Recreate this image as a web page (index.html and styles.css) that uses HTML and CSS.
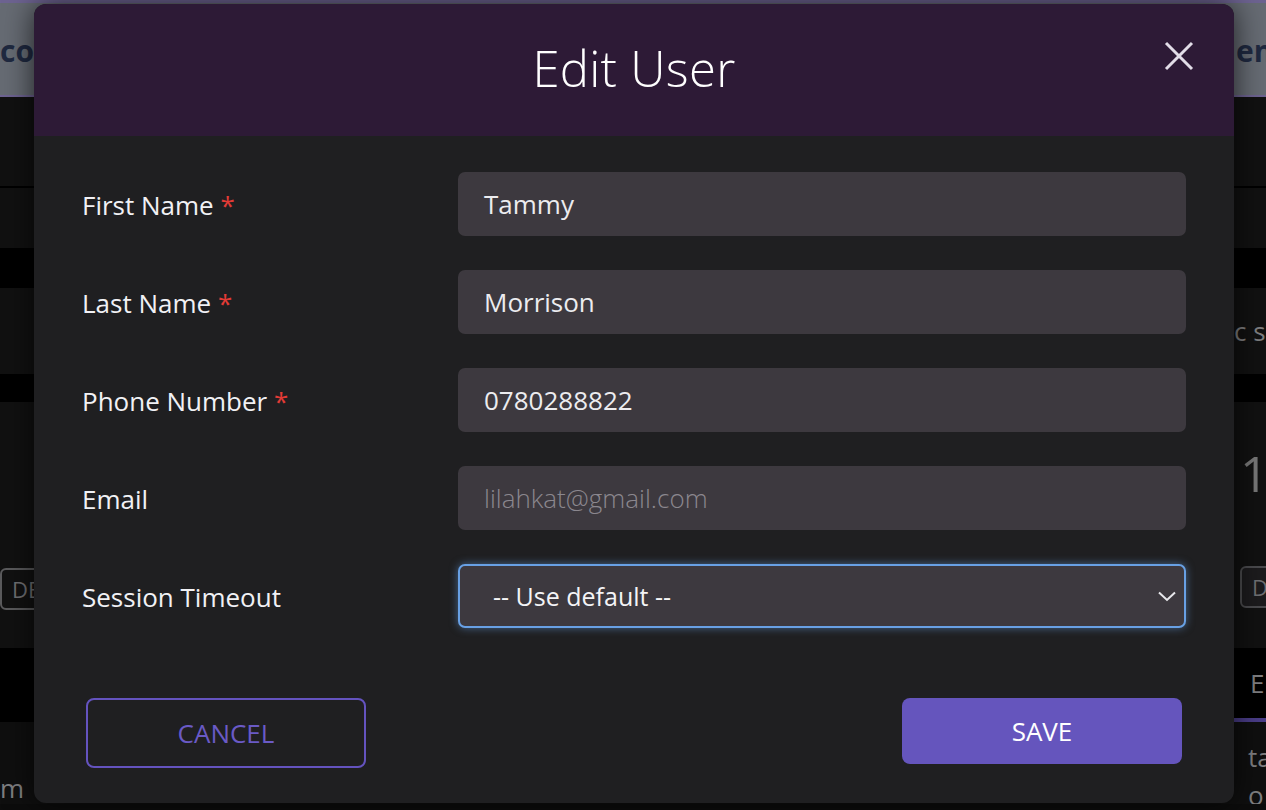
FILE: index.html
```html
<!DOCTYPE html>
<html lang="en">
<head>
    <meta charset="UTF-8">
    <meta name="viewport" content="width=device-width, initial-scale=1.0">
    <title>Edit User</title>
    <link rel="stylesheet" href="styles.css">
</head>
<body>
    <!-- page behind the modal (dimmed) -->
    <div class="page">
        <div class="row topbar">
            <div class="side left brand">sco</div>
            <div></div>
            <div class="side right brand">em</div>
        </div>
        <div class="row r1"><div></div><div></div><div></div></div>
        <div class="row r2"><div></div><div></div><div></div></div>
        <div class="row gapbar h40"><div></div><div></div><div></div></div>
        <div class="row r3">
            <div class="side left"></div>
            <div></div>
            <div class="side right muted">c si</div>
        </div>
        <div class="row gapbar h28"><div></div><div></div><div></div></div>
        <div class="row r4">
            <div class="side left-btn-wrap">
                <span class="ghost-btn left-btn">DE</span>
            </div>
            <div></div>
            <div class="side right stack">
                <span class="big-num">1</span>
                <span class="ghost-btn right-btn">D</span>
            </div>
        </div>
        <div class="row r5">
            <div></div>
            <div></div>
            <div class="side right muted tab">E</div>
        </div>
        <div class="row r6">
            <div class="side left muted bottom">m</div>
            <div></div>
            <div class="side right muted lines">ta<br>o</div>
        </div>
    </div>

    <div class="modal">
        <div class="modal-header">
            <h2 class="modal-title">Edit User</h2>
            <button class="close-btn" aria-label="Close">
                <svg width="30" height="30" viewBox="0 0 30 30">
                    <path d="M2 2 L28 28 M28 2 L2 28" stroke="#e2dde8" stroke-width="3" fill="none"/>
                </svg>
            </button>
        </div>
        <div class="modal-body">
            <div class="field">
                <label>First Name <span class="req">*</span></label>
                <div class="input">Tammy</div>
            </div>
            <div class="field">
                <label>Last Name <span class="req">*</span></label>
                <div class="input">Morrison</div>
            </div>
            <div class="field">
                <label>Phone Number <span class="req">*</span></label>
                <div class="input">0780288822</div>
            </div>
            <div class="field">
                <label>Email</label>
                <div class="input placeholder">lilahkat@gmail.com</div>
            </div>
            <div class="field">
                <label>Session Timeout</label>
                <div class="input select">
                    <span>-- Use default --</span>
                    <svg width="20" height="12" viewBox="0 0 20 12">
                        <path d="M2 2.5 L10 10 L18 2.5" stroke="#e8e8ec" stroke-width="2" fill="none"/>
                    </svg>
                </div>
            </div>
        </div>
        <div class="modal-footer">
            <button class="btn btn-cancel">CANCEL</button>
            <button class="btn btn-save">SAVE</button>
        </div>
    </div>
</body>
</html>
```

FILE: styles.css
```css
* { margin: 0; padding: 0; box-sizing: border-box; }
body { background: #0c0c0c; font-family: "Open Sans", "Noto Sans", sans-serif; overflow: hidden; width: 1266px; height: 810px; }

/* background page */
.page { width: 1266px; }
.row { display: grid; grid-template-columns: 34px 1fr 32px; background: #111; overflow: hidden; }
.side { overflow: hidden; white-space: nowrap; }
.side.left { display: flex; justify-content: flex-end; }
.topbar { height: 97px; background: #666b73; border-top: 3px solid #6d6391; border-bottom: 2px solid #6d6391; align-items: center; }
.brand { font-size: 30px; font-weight: 700; color: #1f2940; padding-top: 2px; }
.side.right.brand { padding-left: 2px; }
.r1 { height: 91px; border-bottom: 2px solid #000; }
.r2 { height: 60px; }
.gapbar { background: #000; }
.h40 { height: 40px; }
.h28 { height: 28px; }
.r3 { height: 86px; align-items: center; }
.muted { color: #7e7e80; font-size: 26px; }
.r4 { height: 246px; }
.stack { display: flex; flex-direction: column; }
.left-btn-wrap { display: flex; align-items: flex-end; padding-bottom: 38px; }
.side.right.stack { padding-left: 6px; }
.big-num { font-size: 50px; color: #777; margin-top: 40px; line-height: 62px; }
.ghost-btn { display: block; flex-shrink: 0; height: 42px; line-height: 38px; font-size: 22px; color: #6f6f72; border: 2px solid #4a4a4d; border-radius: 6px; width: 60px; padding-left: 10px; }
.left-btn { border-color: #5a5a5c; }
.right-btn { margin-top: 62px; background: #1c1b1d; }
.r5 { height: 70px; background: #000; align-items: center; }
.tab { padding-left: 16px; }
.r6 { height: 86px; background: #0f0f0f; }
.r6 > div { border-top: 4px solid #000; }
.r6 > .side.right { border-top-color: #4a3d88; }
.side.left.bottom { justify-content: flex-start; padding-top: 48px; }
.lines { padding-top: 16px; padding-left: 14px; line-height: 38px; }

/* modal */
.modal { position: absolute; top: 4px; left: 34px; width: 1200px; height: 799px; background: #1f1f21; border-radius: 12px; overflow: hidden; box-shadow: 0 0 30px rgba(0, 0, 0, 0.7); }
.modal-header { height: 132px; background: #2d1a36; display: flex; align-items: center; justify-content: center; position: relative; }
.modal-title { font-size: 49px; font-weight: 300; color: #fff; letter-spacing: 0.3px; padding-bottom: 4px; }
.close-btn { position: absolute; right: 40px; top: 37px; background: none; border: none; width: 30px; height: 30px; }
.close-btn svg { display: block; }

.modal-body { padding: 36px 48px 0 48px; display: flex; flex-direction: column; gap: 34px; }
.field { display: flex; align-items: center; height: 64px; }
.field label { width: 376px; font-size: 26px; font-weight: 500; color: #f1f1f5; padding-top: 2px; }
.req { color: #e23b36; }
.input { flex: 1; height: 64px; background: #3d393f; border-radius: 7px; padding: 0 26px; display: flex; align-items: center; font-size: 26px; color: #ececef; }
.input.placeholder { color: #8b878e; font-weight: 300; }
.input.select { border: 2px solid #68a0e4; box-shadow: 0 0 8px rgba(104, 160, 228, 0.55); padding-left: 33px; padding-right: 7px; justify-content: space-between; color: #f4f4f6; font-size: 25px; }

.modal-footer { display: flex; justify-content: space-between; align-items: flex-start; padding: 70px 52px 0 52px; }
.btn { width: 280px; font-family: "Open Sans", "Noto Sans", sans-serif; font-size: 26px; border-radius: 8px; }
.btn-cancel { height: 70px; background: transparent; border: 2px solid #6453bf; color: #6a5ac6; }
.btn-save { height: 66px; background: #6555bd; border: none; color: #fff; font-weight: 500; }
```
